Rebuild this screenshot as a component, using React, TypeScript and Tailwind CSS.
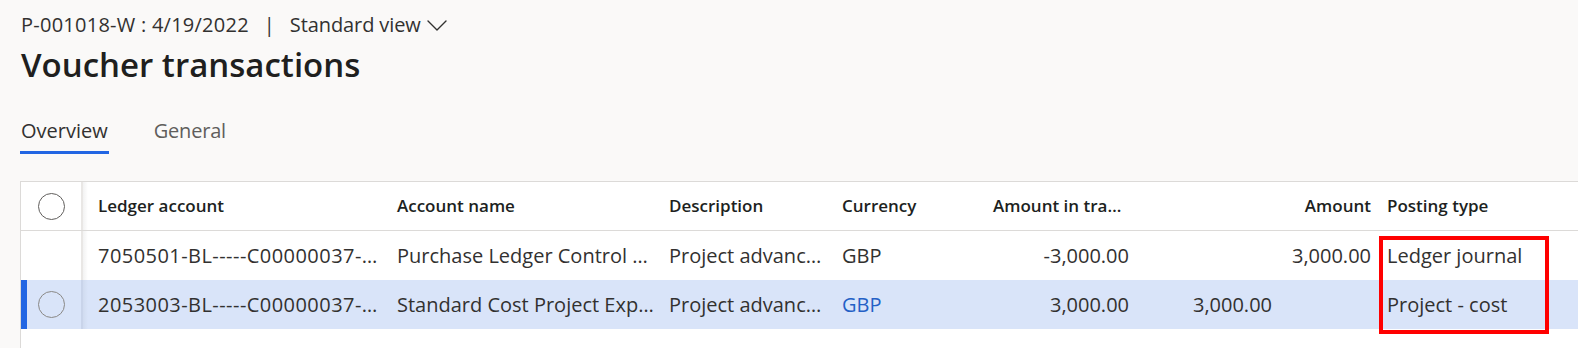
import React from "react";

const COLS =
  "grid grid-cols-[62px_306px_272px_173px_151px_152px_143px_99px_1fr]";

function Circle({ tone }: { tone: "dark" | "light" }) {
  return (
    <div
      className={
        tone === "dark"
          ? "w-[27px] h-[27px] rounded-full border border-[#605e5c] bg-white"
          : "w-[27px] h-[27px] rounded-full border-[1.5px] border-[#8a8886]"
      }
    />
  );
}

function Divider() {
  return <div className="h-full border-r-2 border-[#e9e7e5]" />;
}

export default function App() {
  return (
    <div className="relative w-[1578px] h-[348px] overflow-hidden bg-[#faf9f8] font-['Open_Sans',sans-serif] text-[#323130]">
      <div className="pl-[21px] pt-[11px]">
        <div className="flex items-center h-[28px] text-[20px] leading-[28px] text-[#323130]">
          <span className="tracking-[0.25px]">P-001018-W : 4/19/2022</span>
          <span className="mx-[15px]">|</span>
          <span className="tracking-[-0.1px]">Standard view</span>
          <svg
            className="ml-[6px] mt-[1px]"
            width="20"
            height="11"
            viewBox="0 0 20 11"
            fill="none"
          >
            <polyline
              points="1,1 10,10 19,1"
              stroke="#323130"
              strokeWidth="1.4"
              strokeLinecap="round"
              strokeLinejoin="round"
            />
          </svg>
        </div>
        <div className="mt-[4px] h-[44px] leading-[44px] text-[33px] font-semibold text-[#201f1e]">
          Voucher transactions
        </div>
        <div className="mt-[30px] flex gap-[46px] text-[20px] leading-[28px]">
          <div className="flex flex-col">
            <span className="text-[#323130]">Overview</span>
            <div className="mt-[6px] h-[3px] bg-[#2266e3] -mx-[1px]" />
          </div>
          <div className="flex flex-col">
            <span className="text-[#605e5c] tracking-[-0.2px]">General</span>
          </div>
        </div>
      </div>

      <div className="ml-[20px] mt-[27px] w-[1558px] border-l border-t border-[#dcdad8] bg-white h-[200px]">
        {/* header */}
        <div
          className={`${COLS} h-[49px] border-b border-[#dcdad8] text-[17px] font-semibold text-[#201f1e] items-center`}
        >
          <div className="flex h-full items-center">
            <div className="flex-1 flex justify-center">
              <Circle tone="dark" />
            </div>
            <Divider />
          </div>
          <div className="h-full flex items-center pl-[15px] bg-[linear-gradient(to_right,rgba(0,0,0,0.05),transparent_5px)]">
            Ledger account
          </div>
          <div className="pl-[8px]">Account name</div>
          <div className="pl-[8px]">Description</div>
          <div className="pl-[8px]">Currency</div>
          <div className="pl-[8px]">Amount in tra…</div>
          <div />
          <div className="pr-[8px] text-right">Amount</div>
          <div className="pl-[8px]">Posting type</div>
        </div>

        {/* row 1 */}
        <div className={`${COLS} h-[49px] text-[20px] items-center`}>
          <div className="flex h-full items-center">
            <div className="flex-1" />
            <Divider />
          </div>
          <div className="h-full flex items-center pl-[15px] tracking-[0.45px] bg-[linear-gradient(to_right,rgba(0,0,0,0.05),transparent_5px)]">
            7050501-BL-----C00000037-…
          </div>
          <div className="pl-[8px]">Purchase Ledger Control …</div>
          <div className="pl-[8px]">Project advanc…</div>
          <div className="pl-[8px]">GBP</div>
          <div className="pr-[8px] text-right">-3,000.00</div>
          <div />
          <div className="pr-[8px] text-right">3,000.00</div>
          <div className="pl-[8px]">Ledger journal</div>
        </div>

        {/* row 2 selected */}
        <div
          className={`${COLS} h-[49px] text-[20px] items-center bg-[#d9e4f9]`}
        >
          <div className="relative flex h-full items-center">
            <div className="absolute left-0 top-0 h-full w-[6px] bg-[#2266e3]" />
            <div className="flex-1 flex justify-center">
              <Circle tone="light" />
            </div>
            <div className="h-full border-r-2 border-[#c9d4ea]" />
          </div>
          <div className="h-full flex items-center pl-[15px] tracking-[0.45px] bg-[linear-gradient(to_right,rgba(0,0,0,0.04),transparent_5px)]">
            2053003-BL-----C00000037-…
          </div>
          <div className="pl-[8px]">Standard Cost Project Exp…</div>
          <div className="pl-[8px]">Project advanc…</div>
          <div className="pl-[8px] text-[#2460c6]">GBP</div>
          <div className="pr-[8px] text-right">3,000.00</div>
          <div className="pr-[8px] text-right">3,000.00</div>
          <div />
          <div className="pl-[8px]">Project - cost</div>
        </div>
      </div>

      <div className="absolute left-[1379px] top-[236px] w-[170px] h-[98px] border-4 border-[#ff0000]" />
    </div>
  );
}
